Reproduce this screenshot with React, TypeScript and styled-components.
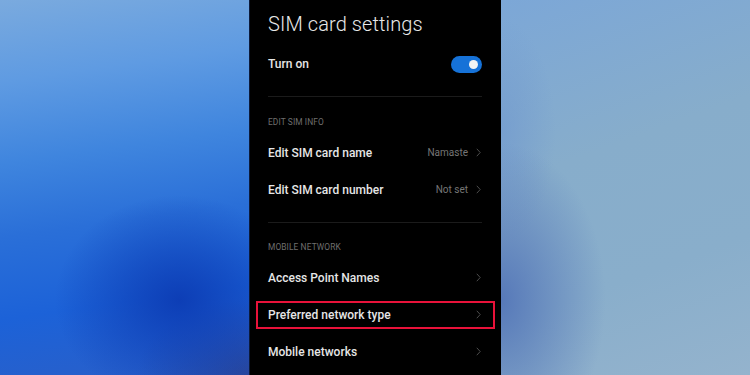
import React from "react";
import styled, { createGlobalStyle } from "styled-components";

const Global = createGlobalStyle`
  html, body { margin: 0; padding: 0; background: #000; }
  body { font-family: Roboto, "Noto Sans", sans-serif; }
  * { box-sizing: border-box; }
`;

const Page = styled.div`
  width: 750px;
  height: 375px;
  display: flex;
  overflow: hidden;
`;

const LeftBackdrop = styled.div`
  flex: 0 0 249px;
  background:
    radial-gradient(ellipse 50% 28% at 72% 80%, rgba(12, 60, 180, 0.95), rgba(12, 60, 180, 0) 100%),
    radial-gradient(ellipse 45% 20% at 100% 100%, rgba(42, 68, 150, 0.9), rgba(42, 68, 150, 0) 100%),
    linear-gradient(172deg, #7aaade 0%, #5f9be2 20%, #3f85de 40%, #2a6fd8 58%, #1c62d8 78%, #2a5fc8 100%);
`;

const RightBackdrop = styled.div`
  flex: 1;
  background:
    radial-gradient(ellipse 42% 42% at 0% 80%, rgba(84, 118, 184, 0.95), rgba(84, 118, 184, 0) 100%),
    radial-gradient(ellipse 22% 30% at 0% 35%, rgba(110, 150, 206, 0.6), rgba(110, 150, 206, 0) 100%),
    linear-gradient(160deg, #7ca7d7 0%, #87adcb 40%, #89aecb 70%, #94b3cd 100%);
`;

const Phone = styled.div`
  flex: 0 0 252px;
  background: #000;
  border-left: 1px solid #0c1a3a;
  padding: 0 19px 0 18px;
  display: flex;
  flex-direction: column;
  color: #ececec;
`;

const Title = styled.h1`
  margin: 12px 0 10px;
  font-size: 20px;
  line-height: 24px;
  font-weight: 300;
  color: #e8e8e8;
  letter-spacing: 0.1px;
`;

const Row = styled.div`
  position: relative;
  height: 37px;
  flex: 0 0 auto;
  display: flex;
  align-items: center;
  justify-content: space-between;
`;

const ToggleRow = styled(Row)`
  height: 36px;
`;

const Label = styled.span`
  font-size: 12px;
  font-weight: 500;
  color: #e6e6e6;
`;

const Trailing = styled.div`
  display: flex;
  align-items: center;
  gap: 8px;
`;

const Value = styled.span`
  font-size: 10px;
  color: #767676;
`;

const Chevron = styled.svg`
  width: 5px;
  height: 9px;
  margin-right: 1px;
`;

const Toggle = styled.div<{ $on: boolean }>`
  width: 31px;
  height: 17px;
  border-radius: 9px;
  background: ${(p) => (p.$on ? "#1672d8" : "#444")};
  display: flex;
  align-items: center;
  justify-content: ${(p) => (p.$on ? "flex-end" : "flex-start")};
  padding: 0 4px;
`;

const Knob = styled.div`
  width: 9px;
  height: 9px;
  border-radius: 50%;
  background: #f4f4f4;
`;

const Divider = styled.hr<{ $top: number }>`
  margin: ${(p) => p.$top}px 0 0;
  border: none;
  height: 1px;
  background: #1b1b1b;
  flex: 0 0 auto;
`;

const SectionHeader = styled.div<{ $top: number }>`
  padding: ${(p) => p.$top}px 0 7px;
  font-size: 8.4px;
  line-height: 10px;
  color: #6e6e6e;
  text-transform: uppercase;
  letter-spacing: 0.1px;
`;

const Highlight = styled.div`
  position: absolute;
  left: -12px;
  right: -13px;
  top: 5px;
  height: 28px;
  border: 2px solid #e8123a;
  pointer-events: none;
`;

const ChevronIcon = () => (
  <Chevron viewBox="0 0 5 9">
    <path d="M0.8 0.8 L4.2 4.5 L0.8 8.2" fill="none" stroke="#4c4c4c" strokeWidth="1" />
  </Chevron>
);

const Item = ({ label, value, highlighted }: { label: string; value?: string; highlighted?: boolean }) => (
  <Row>
    <Label>{label}</Label>
    <Trailing>
      {value && <Value>{value}</Value>}
      <ChevronIcon />
    </Trailing>
    {highlighted && <Highlight />}
  </Row>
);

export default function App() {
  return (
    <>
      <Global />
      <Page>
        <LeftBackdrop />
        <Phone>
          <Title>SIM card settings</Title>
          <ToggleRow>
            <Label>Turn on</Label>
            <Toggle $on>
              <Knob />
            </Toggle>
          </ToggleRow>
          <Divider $top={14} />
          <SectionHeader $top={20}>Edit SIM info</SectionHeader>
          <Item label="Edit SIM card name" value="Namaste" />
          <Item label="Edit SIM card number" value="Not set" />
          <Divider $top={14} />
          <SectionHeader $top={19}>Mobile network</SectionHeader>
          <Item label="Access Point Names" />
          <Item label="Preferred network type" highlighted />
          <Item label="Mobile networks" />
        </Phone>
        <RightBackdrop />
      </Page>
    </>
  );
}
